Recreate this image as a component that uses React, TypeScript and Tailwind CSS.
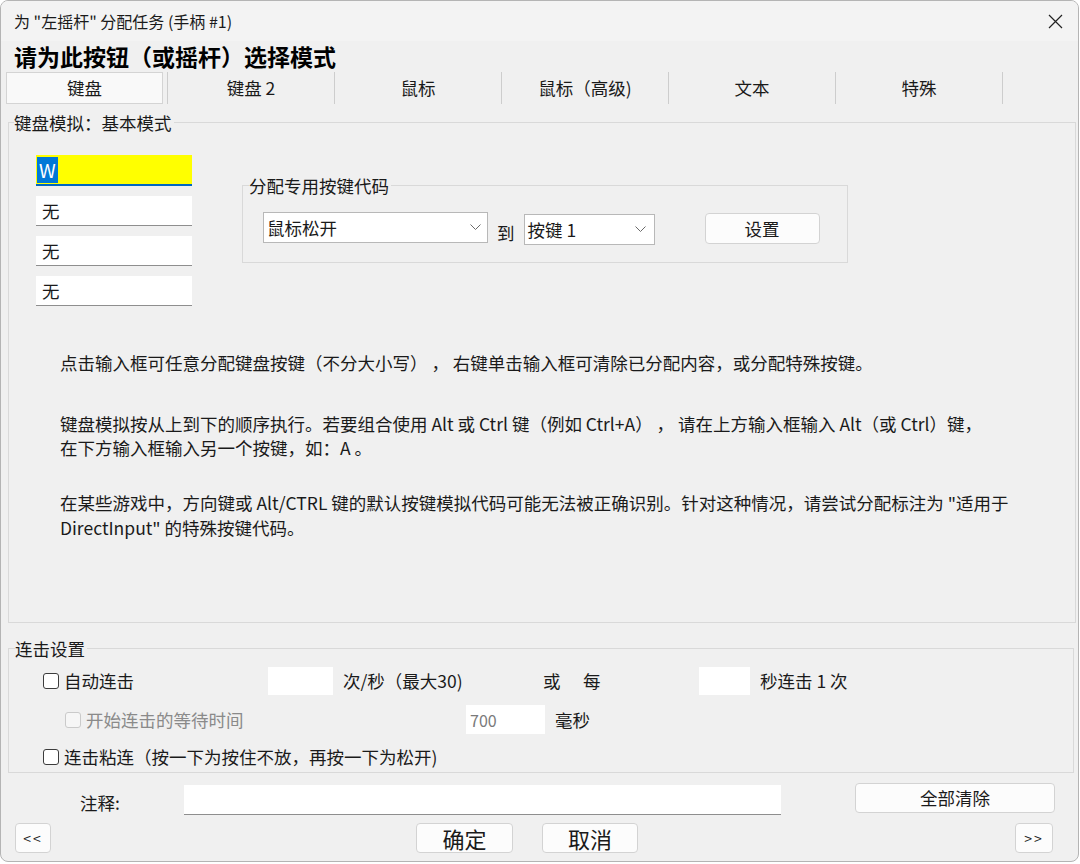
import React from "react";

function Chevron() {
  return (
    <svg width="11" height="7" viewBox="0 0 11 7" className="shrink-0">
      <polyline points="0.5,0.5 5.5,5.5 10.5,0.5" fill="none" stroke="#6a6a6a" strokeWidth="1" />
    </svg>
  );
}

function CheckBox({ disabled }: { disabled?: boolean }) {
  return (
    <span
      className={
        disabled
          ? "block shrink-0 w-[16px] h-[16px] rounded-[3px] border border-[#cacaca] bg-[#f6f6f6]"
          : "block shrink-0 w-[16px] h-[16px] rounded-[3px] border border-[#3c3c3c] bg-white"
      }
    />
  );
}

function Sep() {
  return <div className="w-px h-full bg-[#cdcdcd] shrink-0" />;
}

function Tab({ children }: { children: React.ReactNode }) {
  return <div className="w-[166px] h-full shrink-0 flex items-center justify-center">{children}</div>;
}

export default function App() {
  return (
    <div className="w-[1080px] h-[864px] bg-white font-['Noto_Sans_CJK_SC','Noto_Sans',sans-serif] text-[#1a1a1a] text-[17.5px] leading-[24px]">
      <div className="w-[1079px] h-[862px] border border-[#b4b4b4] rounded-[8px] overflow-hidden bg-[#f0f0f0] flex flex-col">
        {/* Title bar */}
        <div className="h-[40px] shrink-0 bg-[#f3f3f3] flex items-center pl-[13px] pr-[15px]">
          <span className="text-[16px]">为 "左摇杆" 分配任务 (手柄 #1)</span>
          <svg className="ml-auto" width="15" height="15" viewBox="0 0 15 15">
            <path d="M1 1 L14 14 M14 1 L1 14" stroke="#222" strokeWidth="1.2" fill="none" />
          </svg>
        </div>

        {/* Heading */}
        <div className="h-[30px] shrink-0 pl-[13px] text-[23px] font-bold leading-[30px] text-black">
          请为此按钮（或摇杆）选择模式
        </div>

        {/* Tabs */}
        <div className="mt-[1px] h-[32px] flex shrink-0">
          <div className="w-[166px] h-full pl-[5px] pr-[4px] shrink-0">
            <div className="h-full bg-[#f9f9f9] border border-[#d4d4d4] flex items-center justify-center">键盘</div>
          </div>
          <Sep />
          <Tab>键盘 2</Tab>
          <Sep />
          <Tab>鼠标</Tab>
          <Sep />
          <Tab>鼠标（高级)</Tab>
          <Sep />
          <Tab>文本</Tab>
          <Sep />
          <Tab>特殊</Tab>
          <Sep />
        </div>

        {/* Keyboard panel */}
        <div className="relative mt-[18px] ml-[7px] w-[1068px] h-[501px] border border-[#d9d9d9] shrink-0">
          <span className="absolute left-[5px] top-[-12px] bg-[#f0f0f0] pr-[2px]">键盘模拟：基本模式</span>
          <div className="pt-[32px] flex items-start">
            <div className="ml-[27px] w-[156px] flex flex-col shrink-0">
              <div className="h-[31px] bg-[#ffff00] border-b-2 border-[#0067c0] flex items-center pl-[1px]">
                <span className="bg-[#0078d7] text-white h-[26px] leading-[26px] px-[2px] text-[19px]">W</span>
              </div>
              <div className="mt-[10px] h-[30px] bg-white border-b border-[#8e8e8e] pl-[6px] flex items-center">无</div>
              <div className="mt-[10px] h-[30px] bg-white border-b border-[#8e8e8e] pl-[6px] flex items-center">无</div>
              <div className="mt-[10px] h-[30px] bg-white border-b border-[#8e8e8e] pl-[6px] flex items-center">无</div>
            </div>
            <div className="relative ml-[50px] mt-[30px] w-[606px] h-[78px] border border-[#d9d9d9] shrink-0">
              <span className="absolute left-[6px] top-[-12px] bg-[#f0f0f0] pr-[2px]">分配专用按键代码</span>
              <div className="flex items-start pt-[26px] pl-[20px]">
                <div className="w-[225px] h-[31px] bg-white border border-[#b8b8b8] flex items-center justify-between pl-[3px] pr-[6px]">
                  <span>鼠标松开</span>
                  <Chevron />
                </div>
                <span className="ml-[9px] mt-[9px]">到</span>
                <div className="ml-[9px] mt-[2px] w-[131px] h-[31px] bg-white border border-[#b8b8b8] flex items-center justify-between pl-[3px] pr-[8px]">
                  <span>按键 1</span>
                  <Chevron />
                </div>
                <div className="ml-[50px] mt-[1px] w-[115px] h-[31px] bg-[#fcfcfc] border border-[#d3d3d3] rounded-[4px] flex items-center justify-center">
                  设置
                </div>
              </div>
            </div>
          </div>
          <div className="ml-[51px] mt-[45px] whitespace-nowrap">
            <p>点击输入框可任意分配键盘按键（不分大小写） ， 右键单击输入框可清除已分配内容，或分配特殊按键。</p>
            <p className="mt-[37px]">
              键盘模拟按从上到下的顺序执行。若要组合使用 Alt 或 Ctrl 键（例如 Ctrl+A） ， 请在上方输入框输入 Alt（或 Ctrl）键，
              <br />
              在下方输入框输入另一个按键，如：A 。
            </p>
            <p className="mt-[30px] leading-[25px]">
              在某些游戏中，方向键或 Alt/CTRL 键的默认按键模拟代码可能无法被正确识别。针对这种情况，请尝试分配标注为 "适用于
              <br />
              DirectInput" 的特殊按键代码。
            </p>
          </div>
        </div>

        {/* Turbo settings */}
        <div className="relative mt-[25px] ml-[7px] w-[1066px] h-[125px] border border-[#d9d9d9] shrink-0">
          <span className="absolute left-[6px] top-[-12px] bg-[#f0f0f0] pr-[2px]">连击设置</span>
          <div className="mt-[18px] h-[28px] flex items-center whitespace-nowrap">
            <div className="ml-[34px]">
              <CheckBox />
            </div>
            <span className="ml-[5px] w-[204px] shrink-0">自动连击</span>
            <div className="w-[65px] h-[28px] bg-white shrink-0" />
            <span className="ml-[10px] w-[200px] shrink-0">次/秒（最大30)</span>
            <span className="w-[40px] shrink-0">或</span>
            <span className="w-[116px] shrink-0">每</span>
            <div className="w-[51px] h-[28px] bg-white shrink-0" />
            <span className="ml-[10px]">秒连击 1 次</span>
          </div>
          <div className="mt-[10px] h-[29px] flex items-center whitespace-nowrap">
            <div className="ml-[56px]">
              <CheckBox disabled />
            </div>
            <span className="ml-[5px] w-[380px] shrink-0 text-[#8a8a8a]">开始连击的等待时间</span>
            <div className="w-[79px] h-[29px] bg-white shrink-0 pl-[4px] flex items-center text-[16px] text-[#7a7a7a]">700</div>
            <span className="ml-[10px]">毫秒</span>
          </div>
          <div className="mt-[9px] h-[28px] flex items-center whitespace-nowrap">
            <div className="ml-[34px]">
              <CheckBox />
            </div>
            <span className="ml-[5px]">连击粘连（按一下为按住不放，再按一下为松开)</span>
          </div>
        </div>

        {/* Comment row */}
        <div className="mt-[10px] h-[32px] flex items-start shrink-0">
          <span className="ml-[79px] w-[104px] mt-[5px] leading-[30px] shrink-0">注释:</span>
          <div className="w-[597px] h-[30px] mt-[2px] bg-white border-b border-[#8e8e8e] shrink-0" />
          <div className="ml-[74px] w-[200px] h-[30px] bg-[#fcfcfc] border border-[#d3d3d3] rounded-[4px] flex items-center justify-center shrink-0">
            全部清除
          </div>
        </div>

        {/* Buttons row */}
        <div className="mt-[8px] h-[30px] flex items-stretch shrink-0">
          <div className="ml-[14px] w-[36px] bg-[#fcfcfc] border border-[#d3d3d3] rounded-[4px] flex items-center justify-center text-[14px] tracking-[2px] shrink-0">
            &lt;&lt;
          </div>
          <div className="ml-[365px] w-[97px] bg-[#fcfcfc] border border-[#d3d3d3] rounded-[4px] flex items-center justify-center text-[22px] shrink-0">
            确定
          </div>
          <div className="ml-[29px] w-[96px] bg-[#fcfcfc] border border-[#d3d3d3] rounded-[4px] flex items-center justify-center text-[22px] shrink-0">
            取消
          </div>
          <div className="ml-[377px] w-[38px] bg-[#fcfcfc] border border-[#d3d3d3] rounded-[4px] flex items-center justify-center text-[14px] tracking-[2px] shrink-0">
            &gt;&gt;
          </div>
        </div>
      </div>
    </div>
  );
}
